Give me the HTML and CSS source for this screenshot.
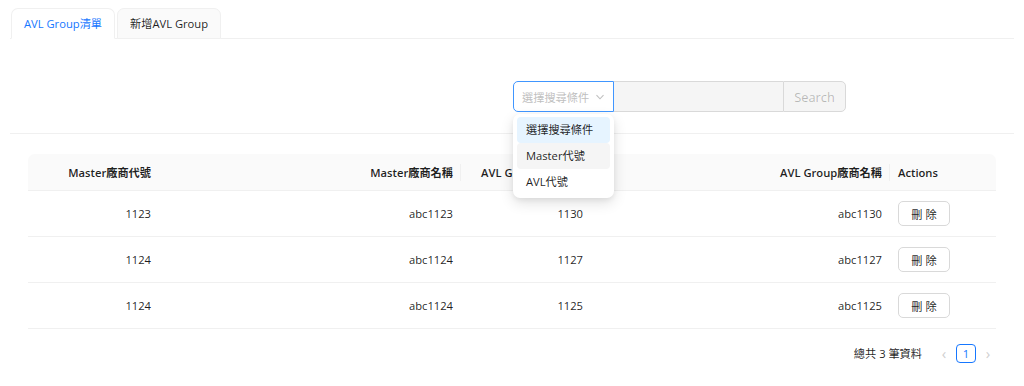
FILE: index.html
```html
<!DOCTYPE html>
<html lang="zh-Hant">
  <head>
    <meta charset="UTF-8" />
    <meta name="viewport" content="width=device-width, initial-scale=1.0" />
    <title>AVL Group</title>
    <link rel="stylesheet" href="styles.css">
  </head>
  <body>
    <div class="page">
      <nav class="tabs">
        <div class="tab active">AVL Group清單</div>
        <div class="tab">新增AVL Group</div>
      </nav>

      <section class="pane">
        <div class="search-row">
          <div></div>
          <div class="search-group">
            <div class="select">
              <span class="placeholder">選擇搜尋條件</span>
              <svg class="chevron" width="10" height="10" viewBox="0 0 10 10">
                <path d="M1.5 3.2 L5 6.8 L8.5 3.2" fill="none" stroke="#bfbfbf" stroke-width="1.1" />
              </svg>
              <ul class="dropdown">
                <li class="selected">選擇搜尋條件</li>
                <li class="hover">Master代號</li>
                <li>AVL代號</li>
              </ul>
            </div>
            <input class="keyword" type="text" disabled />
            <button class="search-btn" type="button" disabled>Search</button>
          </div>
        </div>

        <hr class="divider" />

        <table class="grid">
          <colgroup>
            <col style="width: 131px" />
            <col style="width: 302px" />
            <col style="width: 130px" />
            <col style="width: 299px" />
            <col />
          </colgroup>
          <thead>
            <tr>
              <th class="num">Master廠商代號</th>
              <th class="num sep">Master廠商名稱</th>
              <th class="num sep">AVL Group廠商代號</th>
              <th class="num sep">AVL Group廠商名稱</th>
              <th>Actions</th>
            </tr>
          </thead>
          <tbody>
            <tr>
              <td class="num">1123</td>
              <td class="num">abc1123</td>
              <td class="num">1130</td>
              <td class="num">abc1130</td>
              <td><button class="del" type="button">刪 除</button></td>
            </tr>
            <tr>
              <td class="num">1124</td>
              <td class="num">abc1124</td>
              <td class="num">1127</td>
              <td class="num">abc1127</td>
              <td><button class="del" type="button">刪 除</button></td>
            </tr>
            <tr>
              <td class="num">1124</td>
              <td class="num">abc1124</td>
              <td class="num">1125</td>
              <td class="num">abc1125</td>
              <td><button class="del" type="button">刪 除</button></td>
            </tr>
          </tbody>
        </table>

        <div class="pagination">
          <span class="total">總共 3 筆資料</span>
          <span class="arrow">&lsaquo;</span>
          <span class="page-item">1</span>
          <span class="arrow">&rsaquo;</span>
        </div>
      </section>
    </div>
  </body>
</html>
```

FILE: styles.css
```css
body {
  margin: 0;
  background-color: #fff;
  font-family: "Open Sans", "Noto Sans CJK TC", sans-serif;
  font-size: 11.2px;
  color: rgba(0, 0, 0, 0.88);
}

.page {
  padding: 8px 10px 0;
}

.tabs {
  display: flex;
  gap: 2px;
  border-bottom: 1px solid #f0f0f0;
  padding-left: 1px;
}

.tab {
  height: 29px;
  line-height: 29px;
  padding: 0 12px;
  margin-bottom: -1px;
  background-color: #fafafa;
  border: 1px solid #f0f0f0;
  border-radius: 7px 7px 0 0;
  color: rgba(0, 0, 0, 0.88);
}

.tab.active {
  background-color: #fff;
  border-bottom-color: #fff;
  color: #1677ff;
}

.pane {
  padding-top: 42px;
}

.search-row {
  display: grid;
  grid-template-columns: 1fr 1fr;
}

.search-group {
  display: flex;
  height: 31px;
  margin-left: 1px;
}

.select {
  position: relative;
  width: 101px;
  box-sizing: border-box;
  border: 1px solid #4096ff;
  border-radius: 5px 0 0 5px;
  display: flex;
  align-items: center;
  padding: 0 8px;
  justify-content: space-between;
  background-color: #fff;
}

.placeholder {
  color: #bfbfbf;
}

.chevron {
  margin-top: 1px;
}

.dropdown {
  position: absolute;
  left: -1px;
  top: 32px;
  width: 101px;
  box-sizing: border-box;
  margin: 0;
  padding: 3px 4px;
  list-style: none;
  background-color: #fff;
  border-radius: 7px;
  box-shadow: 0 5px 14px rgba(0, 0, 0, 0.12), 0 2px 5px rgba(0, 0, 0, 0.06);
  z-index: 5;
}

.dropdown li {
  height: 26px;
  line-height: 26px;
  padding: 0 9px;
  border-radius: 4px;
  color: rgba(0, 0, 0, 0.88);
}

.dropdown .selected {
  background-color: #e6f4ff;
}

.dropdown .hover {
  background-color: #f5f5f5;
}

.keyword {
  width: 169px;
  box-sizing: border-box;
  margin: 0;
  border: 1px solid #d9d9d9;
  border-left: none;
  border-right: none;
  background-color: #f5f5f5;
}

.search-btn {
  width: 63px;
  box-sizing: border-box;
  border: 1px solid #d9d9d9;
  border-radius: 0 5px 5px 0;
  background-color: #f5f5f5;
  color: rgba(0, 0, 0, 0.25);
  font-family: inherit;
  font-size: 12.8px;
}

.divider {
  border: none;
  border-top: 1px solid #f0f0f0;
  margin: 21px 0 20px;
}

.grid {
  width: 968px;
  margin: 0 18px;
  border-collapse: separate;
  border-spacing: 0;
  table-layout: fixed;
}

.grid th {
  height: 36px;
  background-color: #fafafa;
  font-weight: 600;
  text-align: left;
  padding: 0 8px;
  border-bottom: 1px solid #f0f0f0;
  position: relative;
}

.grid th:first-child {
  border-top-left-radius: 7px;
}

.grid th:last-child {
  border-top-right-radius: 7px;
}

.grid th.sep::after {
  content: "";
  position: absolute;
  right: 0;
  top: 10px;
  height: 17px;
  border-right: 1px solid #f0f0f0;
}

.grid td {
  height: 45px;
  padding: 0 8px;
  border-bottom: 1px solid #f0f0f0;
  color: rgba(0, 0, 0, 0.88);
}

.grid .num {
  text-align: right;
}

.del {
  width: 52px;
  height: 25px;
  background-color: #fff;
  border: 1px solid #d9d9d9;
  border-radius: 5px;
  font-family: inherit;
  font-size: 11.2px;
  color: rgba(0, 0, 0, 0.88);
  padding: 0;
}

.pagination {
  display: flex;
  justify-content: flex-end;
  align-items: center;
  gap: 6px;
  margin: 14px 20px 0 0;
}

.total {
  margin-right: 10px;
}

.arrow {
  color: #d0d0d0;
  font-size: 15px;
  width: 12px;
  text-align: center;
}

.page-item {
  width: 18px;
  height: 17px;
  line-height: 17px;
  text-align: center;
  border: 1px solid #1677ff;
  border-radius: 4px;
  color: #1677ff;
}
```
